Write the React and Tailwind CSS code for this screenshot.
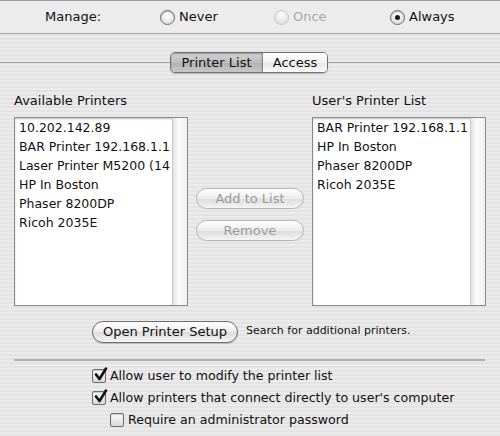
import React from "react"

const font = "font-['Lucida_Grande','DejaVu_Sans',sans-serif]"

function Radio({ label, checked, disabled, className }) {
  return (
    <div className={`flex items-center gap-[4px] ${className}`}>
      <span
        className={`w-[15px] h-[15px] rounded-full border flex items-center justify-center bg-[radial-gradient(circle_at_50%_30%,#ffffff,#d6d6d6)] ${
          disabled ? "border-[#c4c4c4]" : "border-[#6b6b6b] shadow-[inset_0_1px_1px_rgba(0,0,0,0.25)]"
        }`}
      >
        {checked && <span className="w-[5px] h-[5px] rounded-full bg-[#1a1a1a]" />}
      </span>
      <span className={disabled ? "text-[#a8a8a8]" : "text-[#111]"}>{label}</span>
    </div>
  )
}

function Check({ label, checked, className }) {
  return (
    <div className={`flex items-center gap-[4px] h-[22px] ${className}`}>
      <span className="relative w-[14px] h-[14px] border border-[#6d6d6d] rounded-[2px] bg-[linear-gradient(#fdfdfd,#d9d9d9)] shadow-[inset_0_1px_1px_rgba(0,0,0,0.2)]">
        {checked && (
          <svg viewBox="0 0 14 14" className="absolute left-[1px] top-[-3px] w-[14px] h-[15px]">
            <path d="M2 7 L5.5 11.5 L12 1" fill="none" stroke="#111" strokeWidth="2.6" strokeLinecap="round" strokeLinejoin="round" />
          </svg>
        )}
      </span>
      <span className="text-[#111] text-[12.6px]">{label}</span>
    </div>
  )
}

function ListBox({ items }) {
  return (
    <div className="flex w-[174px] h-[189px] border border-[#8a8a8a] bg-white shadow-[inset_0_1px_2px_rgba(0,0,0,0.25)]">
      <div className="flex-1 pl-[4px] overflow-hidden whitespace-nowrap text-[12.5px]">
        {items.map((it) => (
          <div key={it} className="h-[19px] leading-[19px] text-[#111]">
            {it}
          </div>
        ))}
      </div>
      <div className="w-[15px] border-l border-[#c8c8c8] bg-[linear-gradient(90deg,#e4e4e4,#fbfbfb_40%,#f0f0f0)]" />
    </div>
  )
}

function PillButton({ children, disabled, className }) {
  return (
    <div
      className={`flex items-center justify-center rounded-full border bg-[linear-gradient(#ffffff,#ececec_50%,#dcdcdc_51%,#f4f4f4)] ${
        disabled ? "border-[#b5b5b5] text-[#9a9a9a]" : "border-[#6d6d6d] text-[#111] shadow-[0_1px_1px_rgba(0,0,0,0.2)]"
      } ${className}`}
    >
      {children}
    </div>
  )
}

export default function App() {
  const available = [
    "10.202.142.89",
    "BAR Printer 192.168.1.1",
    "Laser Printer M5200 (14",
    "HP In Boston",
    "Phaser 8200DP",
    "Ricoh 2035E",
  ]
  const users = ["BAR Printer 192.168.1.1", "HP In Boston", "Phaser 8200DP", "Ricoh 2035E"]

  return (
    <div
      className={`w-[500px] h-[436px] overflow-hidden text-[13px] ${font} bg-[#e8e8e8] bg-[repeating-linear-gradient(#ebebeb_0px,#ebebeb_2px,#e3e3e3_2px,#e3e3e3_4px)]`}
    >
      <div className="h-[34px] border-t border-[#9a9a9a] border-b border-b-[#a8a8a8] bg-[#ececec] flex items-center">
        <span className="ml-[45px] w-[115px] text-[#111]">Manage:</span>
        <Radio label="Never" className="w-[114px]" />
        <Radio label="Once" disabled className="w-[116px]" />
        <Radio label="Always" checked />
      </div>

      <div className="relative h-[22px] mt-[18px] flex justify-center">
        <div className="absolute left-0 right-0 top-[10px] border-t border-[#a0a0a0]" />
        <div className="relative flex h-[21px] ml-[-2px] rounded-[5px] border border-[#707070] overflow-hidden shadow-[0_1px_1px_rgba(0,0,0,0.2)]">
          <div className="w-[92px] flex items-center justify-center bg-[linear-gradient(#d4d4d4,#bdbdbd_50%,#b0b0b0_51%,#c8c8c8)] border-r border-[#8a8a8a] shadow-[inset_0_1px_2px_rgba(0,0,0,0.3)] text-[#111]">
            Printer List
          </div>
          <div className="w-[64px] flex items-center justify-center bg-[linear-gradient(#ffffff,#f2f2f2_50%,#e6e6e6_51%,#fbfbfb)] text-[#111]">
            Access
          </div>
        </div>
      </div>

      <div className="flex pl-[14px] mt-[19px]">
        <div className="flex flex-col">
          <div className="h-[24px] leading-[16px] text-[#111]">Available Printers</div>
          <ListBox items={available} />
        </div>
        <div className="flex flex-col gap-[11px] ml-[8px] mt-[95px]">
          <PillButton disabled className="w-[108px] h-[21px]">Add to List</PillButton>
          <PillButton disabled className="w-[108px] h-[21px]">Remove</PillButton>
        </div>
        <div className="flex flex-col ml-[8px]">
          <div className="h-[24px] leading-[16px] text-[#111]">User&apos;s Printer List</div>
          <ListBox items={users} />
        </div>
      </div>

      <div className="flex items-center mt-[14px] ml-[92px] h-[23px]">
        <PillButton className="w-[146px] h-[22px]">Open Printer Setup</PillButton>
        <span className="ml-[8px] text-[11px] text-[#111]">Search for additional printers.</span>
      </div>

      <div className="mx-[14px] mt-[16px] border-t-2 border-[#b0b0b0] w-[471px]" />

      <div className="mt-[4px] flex flex-col">
        <Check checked label="Allow user to modify the printer list" className="ml-[92px]" />
        <Check checked label="Allow printers that connect directly to user's computer" className="ml-[92px]" />
        <Check label="Require an administrator password" className="ml-[110px]" />
      </div>
    </div>
  )
}
